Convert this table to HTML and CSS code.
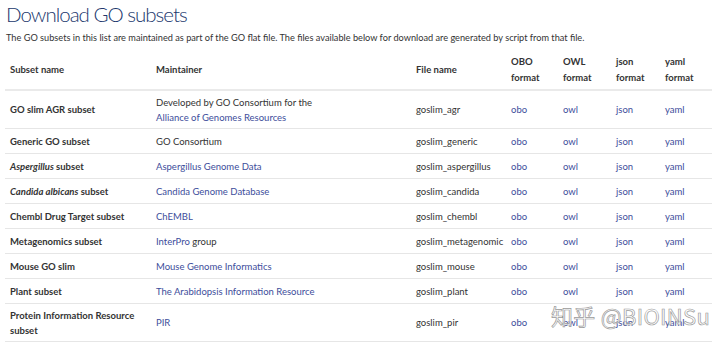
FILE: index.html
```html
<!DOCTYPE html>
<html lang="en">
<head>
    <meta charset="UTF-8">
    <meta name="viewport" content="width=device-width, initial-scale=1.0">
    <title>Download GO subsets</title>
    <link rel="stylesheet" href="styles.css">
</head>
<body>
    <div class="page">
        <h1>Download GO subsets</h1>
        <p class="intro">The GO subsets in this list are maintained as part of the GO flat file. The files available below for download are generated by script from that file.</p>

        <table class="subsets">
            <thead>
                <tr>
                    <th class="c-name">Subset name</th>
                    <th class="c-maint">Maintainer</th>
                    <th class="c-file">File name</th>
                    <th class="c-obo">OBO<br>format</th>
                    <th class="c-owl">OWL<br>format</th>
                    <th class="c-json">json<br>format</th>
                    <th class="c-yaml">yaml<br>format</th>
                </tr>
            </thead>
            <tbody>
                <tr class="tall">
                    <td class="name">GO slim AGR subset</td>
                    <td>Developed by GO Consortium for the<br><a href="#">Alliance of Genomes Resources</a></td>
                    <td>goslim_agr</td>
                    <td><a href="#">obo</a></td>
                    <td><a href="#">owl</a></td>
                    <td><a href="#">json</a></td>
                    <td><a href="#">yaml</a></td>
                </tr>
                <tr>
                    <td class="name">Generic GO subset</td>
                    <td>GO Consortium</td>
                    <td>goslim_generic</td>
                    <td><a href="#">obo</a></td>
                    <td><a href="#">owl</a></td>
                    <td><a href="#">json</a></td>
                    <td><a href="#">yaml</a></td>
                </tr>
                <tr>
                    <td class="name"><em>Aspergillus</em> subset</td>
                    <td><a href="#">Aspergillus Genome Data</a></td>
                    <td>goslim_aspergillus</td>
                    <td><a href="#">obo</a></td>
                    <td><a href="#">owl</a></td>
                    <td><a href="#">json</a></td>
                    <td><a href="#">yaml</a></td>
                </tr>
                <tr>
                    <td class="name"><em>Candida albicans</em> subset</td>
                    <td><a href="#">Candida Genome Database</a></td>
                    <td>goslim_candida</td>
                    <td><a href="#">obo</a></td>
                    <td><a href="#">owl</a></td>
                    <td><a href="#">json</a></td>
                    <td><a href="#">yaml</a></td>
                </tr>
                <tr>
                    <td class="name">Chembl Drug Target subset</td>
                    <td><a href="#">ChEMBL</a></td>
                    <td>goslim_chembl</td>
                    <td><a href="#">obo</a></td>
                    <td><a href="#">owl</a></td>
                    <td><a href="#">json</a></td>
                    <td><a href="#">yaml</a></td>
                </tr>
                <tr>
                    <td class="name">Metagenomics subset</td>
                    <td><a href="#">InterPro</a> group</td>
                    <td>goslim_metagenomic</td>
                    <td><a href="#">obo</a></td>
                    <td><a href="#">owl</a></td>
                    <td><a href="#">json</a></td>
                    <td><a href="#">yaml</a></td>
                </tr>
                <tr>
                    <td class="name">Mouse GO slim</td>
                    <td><a href="#">Mouse Genome Informatics</a></td>
                    <td>goslim_mouse</td>
                    <td><a href="#">obo</a></td>
                    <td><a href="#">owl</a></td>
                    <td><a href="#">json</a></td>
                    <td><a href="#">yaml</a></td>
                </tr>
                <tr>
                    <td class="name">Plant subset</td>
                    <td><a href="#">The Arabidopsis Information Resource</a></td>
                    <td>goslim_plant</td>
                    <td><a href="#">obo</a></td>
                    <td><a href="#">owl</a></td>
                    <td><a href="#">json</a></td>
                    <td><a href="#">yaml</a></td>
                </tr>
                <tr class="tall">
                    <td class="name">Protein Information Resource<br>subset</td>
                    <td><a href="#">PIR</a></td>
                    <td>goslim_pir</td>
                    <td><a href="#">obo</a></td>
                    <td><a href="#">owl</a></td>
                    <td><a href="#">json</a></td>
                    <td><a href="#">yaml</a></td>
                </tr>
            </tbody>
        </table>

        <div class="watermark">知乎 @BIOINSu</div>
    </div>
</body>
</html>
```

FILE: styles.css
```css
body {
    margin: 0;
    padding: 0;
    background-color: #fff;
    font-family: Lato, "Open Sans", sans-serif;
    color: #333;
}

.page {
    position: relative;
    padding: 0 8px 0 5px;
}

h1 {
    margin: 0;
    padding: 2px 0 0 1px;
    font-weight: 300;
    font-size: 20.5px;
    line-height: 25px;
    color: #21376d;
    letter-spacing: -1px;
}

.intro {
    margin: 4px 0 0 1px;
    font-size: 9.2px;
    line-height: 14px;
    color: #333;
}

.subsets {
    width: 707px;
    margin-top: 3px;
    border-collapse: collapse;
    font-size: 9.5px;
    table-layout: fixed;
}

.subsets th {
    text-align: left;
    font-weight: 700;
    padding: 6px 5px 3px;
    line-height: 16px;
    border-bottom: 2px solid #eaeaea;
    color: #333;
    vertical-align: middle;
}

/* content widths, they add up to the table width minus padding */
.c-name { width: 136px; }
.c-maint { width: 250px; }
.c-file { width: 85px; }
.c-obo { width: 42px; }
.c-owl { width: 43px; }
.c-json { width: 39px; }
.c-yaml { width: 42px; }

.subsets td {
    padding: 0 5px;
    height: 24px;
    line-height: 15px;
    border-bottom: 1px solid #e6e6e6;
    vertical-align: middle;
    white-space: nowrap;
}

.subsets tr.tall td {
    height: 37px;
}

.subsets td.name {
    font-weight: 700;
    color: #333;
}

.subsets td.name em {
    font-style: italic;
}

.subsets a {
    color: #3d4d9b;
    text-decoration: none;
}

.watermark {
    position: absolute;
    left: 551px;
    top: 300px;
    white-space: nowrap;
    font-family: "Noto Sans CJK SC", "Noto Sans", sans-serif;
    font-size: 22px;
    line-height: 30px;
    color: rgba(255, 255, 255, 0.7);
    -webkit-text-stroke: 0.7px #9a9a9a;
    letter-spacing: 0.3px;
}
```
